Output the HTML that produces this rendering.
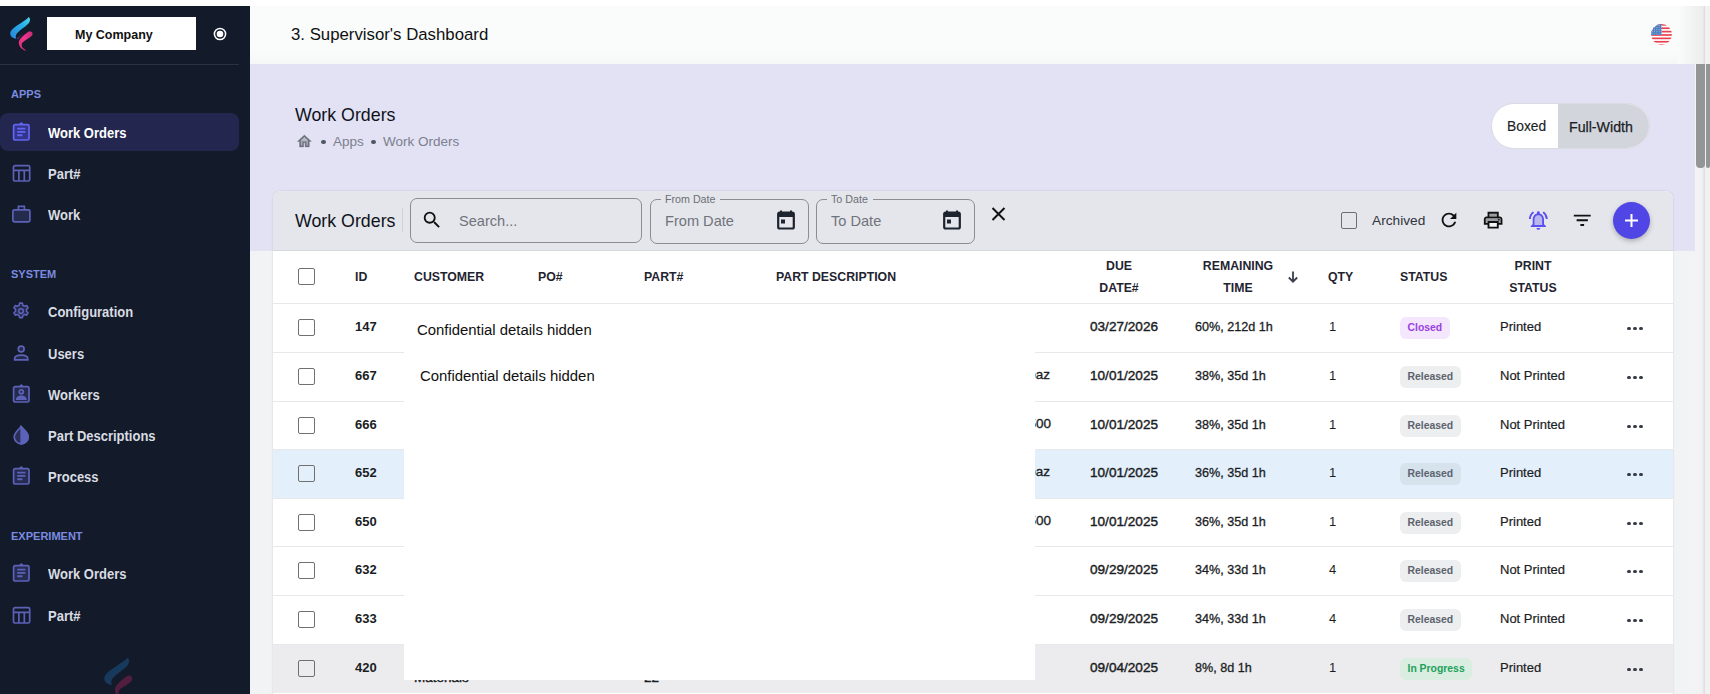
<!DOCTYPE html>
<html><head><meta charset="utf-8">
<style>
*{box-sizing:border-box;margin:0;padding:0}
html,body{width:1710px;height:694px;overflow:hidden;background:#fff;font-family:"Liberation Sans",sans-serif}
.abs{position:absolute}
#side{position:absolute;left:0;top:6px;width:250px;height:688px;background:#131a29;overflow:hidden}
.sec{position:absolute;left:11px;font-size:11.6px;font-weight:bold;color:#7b8be0;line-height:12px;transform:scaleX(.95);transform-origin:0 0}
.item{position:absolute;left:0;width:239px;height:38px}
.item.act{background:#23264e;border-radius:8px}
.item .tx{position:absolute;left:48px;top:1px;line-height:38px;font-size:14px;font-weight:bold;color:#d9dce2;transform:scaleX(.928);transform-origin:0 0;white-space:nowrap}
.item.act .tx{color:#fff}
.item svg{position:absolute;left:11px;top:9px}
#hdr{position:absolute;left:250px;top:6px;width:1455px;height:58px;background:linear-gradient(90deg,#fafbfb 0,#fafbfb 1428px,#ececec 1453px,#d8d8d8 1455px)}
#main{position:absolute;left:250px;top:64px;width:1446px;height:630px;background:#f2f3f5}
#lav{position:absolute;left:250px;top:64px;width:1445px;height:187px;background:#e3e2f4}
.hd{position:absolute;font-size:12.3px;font-weight:bold;color:#1f2430;line-height:22px}
.cb{position:absolute;width:17px;height:17px;border:1.5px solid #707070;border-radius:2px}
.row{position:absolute;left:273px;width:1400px;border-bottom:1px solid #e6e7ea;background:#fff}
.c{position:absolute;font-size:13px;color:#1a1d24;line-height:16px}
.chip{position:absolute;left:1400px;height:22px;border-radius:6px;font-size:10.4px;font-weight:bold;line-height:22px;padding:0 7.5px;background:#eceef0;color:#5d636d}
.dots{position:absolute;left:1627px;width:17px;height:5px}
.dots i{position:absolute;top:0.5px;width:3.6px;height:3.6px;border-radius:50%;background:#363b46}
</style></head><body>
<!-- sidebar -->
<div id="side">
  <!-- logo -->
  <svg class="abs" style="left:6px;top:8px" width="32" height="40" viewBox="0 0 32 40">
    <defs>
      <linearGradient id="lg1" x1="0" y1="1" x2="1" y2="0"><stop offset="0" stop-color="#2a86d8"/><stop offset="0.6" stop-color="#27aee8"/><stop offset="1" stop-color="#4fd6ea"/></linearGradient>
      <linearGradient id="lg2" x1="1" y1="0" x2="0" y2="1"><stop offset="0" stop-color="#c52a78"/><stop offset="0.5" stop-color="#f0368a"/><stop offset="1" stop-color="#e02c7c"/></linearGradient>
    </defs>
    <path d="M22.8 2.9 C24.5 4 24.5 7 22.5 9.5 C19 13 13 16.5 10.5 20 C9.5 21.5 9.5 23.5 10.5 24.7 C7 24.5 4.2 22.5 4.2 19.5 C4.2 17 6.5 14.5 11 11.5 C16 8 20.5 5.5 22.8 2.9Z" fill="url(#lg1)"/>
    <path d="M10.5 24.7 C13 22 18 19.5 22 17.5 C18 19 14 22 12.5 25.5Z" fill="#4a2e6a"/>
    <path d="M23.5 17.2 C26.5 17.5 27.5 19.5 26 21.5 C24 24 19 26 16.5 28.5 C15 30 15.5 33 17.5 34.5 C18.5 35.3 19.8 36 20.5 36.8 C17.5 36.5 14 34 13 30.5 C12.2 27.5 13.5 25 16.5 22.5 C18.5 20.5 21 18.5 23.5 17.2Z" fill="url(#lg2)"/>
  </svg>
  <div class="abs" style="left:47px;top:11px;width:149px;height:33px;background:#fff;font-size:12.5px;font-weight:bold;color:#111;line-height:37px;padding-left:28px">My Company</div>
  <svg class="abs" style="left:213px;top:21px" width="14" height="14" viewBox="0 0 14 14"><circle cx="7" cy="7" r="5.6" fill="none" stroke="#fff" stroke-width="1.5"/><circle cx="7" cy="7" r="3.3" fill="#fff"/></svg>
  <div class="abs" style="left:0;top:58px;width:239px;height:1px;background:#2b3242"></div>

  <div class="sec" style="top:82px">APPS</div>
  <div class="item act" style="top:107px">
    <svg width="20" height="20" viewBox="0 0 20 20" fill="none" stroke="#6366f1" stroke-width="1.7"><rect x="2.6" y="2.6" width="15.4" height="15.4" rx="1.6" fill="#33358a"/><path d="M8.3 2.6 L10.3 0.9 L12.3 2.6" fill="#6366f1" stroke-width="1.2"/><path d="M6.2 6.6h8.2M6.2 9.9h8.2M6.2 13.2h5.2" stroke-width="1.9"/></svg>
    <div class="tx">Work Orders</div></div>
  <div class="item" style="top:148px">
    <svg width="20" height="20" viewBox="0 0 20 20" fill="none" stroke="#5c62b8" stroke-width="1.7"><rect x="2.5" y="2.6" width="16.2" height="15.4" rx="1.6"/><path d="M2.5 7.4h16.2M7.9 7.4v10.6M13.3 7.4v10.6"/></svg>
    <div class="tx">Part#</div></div>
  <div class="item" style="top:189px">
    <svg width="20" height="20" viewBox="0 0 20 20" fill="none" stroke="#5c62b8" stroke-width="1.7"><rect x="1.9" y="5.9" width="17" height="12" rx="1.6" fill="#252b4d"/><path d="M7.4 5.9V2.4h6v3.5"/></svg>
    <div class="tx">Work</div></div>

  <div class="sec" style="top:262px">SYSTEM</div>
  <div class="item" style="top:286px">
    <svg width="20" height="20" viewBox="0 0 24 24" fill="none" stroke="#5c62b8" stroke-width="1.9" stroke-linejoin="round"><path d="M10.3 2.5h3.4l.6 2.7 1.9 1.1 2.6-.9 1.7 2.9-2 1.8v2.2l2 1.8-1.7 2.9-2.6-.9-1.9 1.1-.6 2.7h-3.4l-.6-2.7-1.9-1.1-2.6.9-1.7-2.9 2-1.8v-2.2l-2-1.8 1.7-2.9 2.6.9 1.9-1.1z" fill="#242a4c"/><circle cx="12" cy="12" r="2.8"/></svg>
    <div class="tx">Configuration</div></div>
  <div class="item" style="top:328px">
    <svg width="20" height="20" viewBox="0 0 20 20" fill="none" stroke="#5c62b8" stroke-width="1.7"><circle cx="10.2" cy="6" r="2.9" fill="#242a4c"/><path d="M3.6 16.8v-.9c0-2.3 2.9-3.7 6.6-3.7s6.6 1.4 6.6 3.7v.9z" fill="#242a4c"/></svg>
    <div class="tx">Users</div></div>
  <div class="item" style="top:369px">
    <svg width="20" height="20" viewBox="0 0 20 20" fill="none" stroke="#5c62b8" stroke-width="1.7"><rect x="2.6" y="2.6" width="15.4" height="15.4" rx="1.6" fill="#242a4c"/><path d="M8.3 2.6 L10.3 0.9 L12.3 2.6" fill="#5c62b8" stroke-width="1.2"/><circle cx="10.3" cy="7.8" r="2"/><path d="M5.8 15.2c.3-1.9 2-2.9 4.5-2.9s4.2 1 4.5 2.9z" fill="#5c62b8"/></svg>
    <div class="tx">Workers</div></div>
  <div class="item" style="top:410px">
    <svg width="20" height="20" viewBox="0 0 20 20" fill="none" stroke="#5c62b8" stroke-width="1.7"><path d="M10.2 1.6C7.5 4.6 3.2 8 3.2 11.8a7 7 0 0 0 14 0c0-3.8-4.3-7.2-7-10.2z" fill="#2a2f58"/><path d="M10.2 2v16.8a7 7 0 0 0 7-7c0-3.8-4.3-7-7-9.8z" fill="#5c62b8"/></svg>
    <div class="tx">Part Descriptions</div></div>
  <div class="item" style="top:451px">
    <svg width="20" height="20" viewBox="0 0 20 20" fill="none" stroke="#5c62b8" stroke-width="1.7"><rect x="2.6" y="2.6" width="15.4" height="15.4" rx="1.6" fill="#262b50"/><path d="M8.3 2.6 L10.3 0.9 L12.3 2.6" fill="#5c62b8" stroke-width="1.2"/><path d="M6.2 6.6h8.2M6.2 9.9h8.2M6.2 13.2h5.2" stroke-width="1.9"/></svg>
    <div class="tx">Process</div></div>

  <div class="sec" style="top:524px">EXPERIMENT</div>
  <div class="item" style="top:548px">
    <svg width="20" height="20" viewBox="0 0 20 20" fill="none" stroke="#5c62b8" stroke-width="1.7"><rect x="2.6" y="2.6" width="15.4" height="15.4" rx="1.6" fill="#262b50"/><path d="M8.3 2.6 L10.3 0.9 L12.3 2.6" fill="#5c62b8" stroke-width="1.2"/><path d="M6.2 6.6h8.2M6.2 9.9h8.2M6.2 13.2h5.2" stroke-width="1.9"/></svg>
    <div class="tx">Work Orders</div></div>
  <div class="item" style="top:590px">
    <svg width="20" height="20" viewBox="0 0 20 20" fill="none" stroke="#5c62b8" stroke-width="1.7"><rect x="2.5" y="2.6" width="16.2" height="15.4" rx="1.6"/><path d="M2.5 7.4h16.2M7.9 7.4v10.6M13.3 7.4v10.6"/></svg>
    <div class="tx">Part#</div></div>
  <svg class="abs" style="left:99px;top:648px;opacity:.4" width="40" height="50" viewBox="0 0 32 40">
    <path d="M22.8 2.9 C24.5 4 24.5 7 22.5 9.5 C19 13 13 16.5 10.5 20 C9.5 21.5 9.5 23.5 10.5 24.7 C7 24.5 4.2 22.5 4.2 19.5 C4.2 17 6.5 14.5 11 11.5 C16 8 20.5 5.5 22.8 2.9Z" fill="#1f6aa8"/>
    <path d="M23.5 17.2 C26.5 17.5 27.5 19.5 26 21.5 C24 24 19 26 16.5 28.5 C15 30 15.5 33 17.5 34.5 C18.5 35.3 19.8 36 20.5 36.8 C17.5 36.5 14 34 13 30.5 C12.2 27.5 13.5 25 16.5 22.5 C18.5 20.5 21 18.5 23.5 17.2Z" fill="#b02462"/>
  </svg>
</div>

<!-- header -->
<div id="hdr"><div class="abs" style="left:0;top:44px;width:1428px;height:14px;background:linear-gradient(180deg,rgba(0,0,0,0),rgba(0,0,0,.018))"></div>
  <div class="abs" style="left:41px;top:19px;font-size:16.8px;color:#111;line-height:20px">3. Supervisor's Dashboard</div>
</div>
<div id="main"></div>
<div id="lav"></div>
<!-- title -->
<div class="abs" style="left:295px;top:105px;font-size:17.8px;color:#0f1320;line-height:20px">Work Orders</div>
<svg class="abs" style="left:296px;top:132.5px" width="16.8" height="16.8" viewBox="0 0 24 24"><path d="M7 10.19V18h2v-6h6v6h2v-7.81l-5-4.5z" fill="#b8bbc6"/><path d="M12 5.69l5 4.5V18h-2v-6H9v6H7v-7.81l5-4.5M12 3L2 12h3v8h6v-6h2v6h6v-8h3L12 3z" fill="#6b717c" stroke="#6b717c" stroke-width=".5"/></svg>
<div class="abs" style="left:321px;top:140px;width:4.5px;height:4px;border-radius:50%;background:#4f5661"></div>
<div class="abs" style="left:333px;top:134px;font-size:13.5px;color:#7a808c;line-height:16px">Apps</div>
<div class="abs" style="left:371px;top:140px;width:4.5px;height:4px;border-radius:50%;background:#4f5661"></div>
<div class="abs" style="left:383px;top:134px;font-size:13.5px;color:#7a808c;line-height:16px">Work Orders</div>
<!-- toggle -->
<div class="abs" style="left:1491px;top:103px;width:159px;height:46px;border-radius:23px;background:#fff;border:1px solid #dadbe3;overflow:hidden">
  <div class="abs" style="left:66px;top:0;width:93px;height:46px;background:#d3d5dc"></div>
  <div class="abs" style="left:15px;top:14px;font-size:13.8px;color:#1b1f27;line-height:18px;-webkit-text-stroke:0.15px #1b1f27">Boxed</div>
  <div class="abs" style="left:77px;top:14px;font-size:14.2px;color:#1b1f27;line-height:18px;-webkit-text-stroke:0.25px #1b1f27">Full-Width</div>
</div>
<!-- card toolbar -->
<div class="abs" style="left:273px;top:191px;width:1400px;height:510px;background:#fff;border-radius:8px 8px 0 0;box-shadow:0 0 2px rgba(40,40,60,.18)"></div>
<div class="abs" style="left:273px;top:191px;width:1400px;height:60px;background:#e5e6eb;border-radius:8px 8px 0 0;border-bottom:1px solid #d7d8dc"></div>
<div class="abs" style="left:295px;top:211px;font-size:17.8px;color:#0f1320;line-height:20px">Work Orders</div>
<div class="abs" style="left:402px;top:208px;width:1px;height:24px;background:#d0d1d6"></div>
<div class="abs" style="left:410px;top:198px;width:232px;height:45px;border:1px solid #8b8d92;border-radius:7px"></div>
<svg class="abs" style="left:421px;top:209px" width="22" height="22" viewBox="0 0 24 24"><path d="M15.5 14h-.79l-.28-.27A6.471 6.471 0 0 0 16 9.5 6.500 6.500 0 1 0 9.5 16c1.61 0 3.09-.59 4.23-1.57l.27.28v.79l5 4.99L20.49 19l-4.99-5zm-6 0C7.01 14 5 11.99 5 9.5S7.01 5 9.5 5 14 7.01 14 9.5 11.99 14 9.5 14z" fill="#111"/></svg>
<div class="abs" style="left:459px;top:212.5px;font-size:14.6px;color:#6f737b;line-height:16px">Search...</div>
<!-- from date -->
<div class="abs" style="left:650px;top:199px;width:159px;height:45px;border:1px solid #8b8d92;border-radius:7px"></div>
<div class="abs" style="left:661px;top:195px;width:59px;height:8px;background:#e5e6eb"></div>
<div class="abs" style="left:665px;top:193px;font-size:10.7px;color:#6b6f77;line-height:13px">From Date</div>
<div class="abs" style="left:665px;top:213px;font-size:14.6px;color:#6f737b;line-height:16px">From Date</div>
<svg class="abs" style="left:777px;top:210px" width="18" height="20" viewBox="0 0 18 20"><path d="M4 0.5v3M14 0.5v3" stroke="#1d2430" stroke-width="2"/><rect x="1.2" y="2.5" width="15.6" height="16" rx="1.5" fill="none" stroke="#1d2430" stroke-width="2.2"/><rect x="1.2" y="2.5" width="15.6" height="4.5" fill="#1d2430"/><rect x="4" y="9.5" width="4" height="4" fill="#1d2430"/></svg>
<!-- to date -->
<div class="abs" style="left:816px;top:199px;width:159px;height:45px;border:1px solid #8b8d92;border-radius:7px"></div>
<div class="abs" style="left:827px;top:195px;width:46px;height:8px;background:#e5e6eb"></div>
<div class="abs" style="left:831px;top:193px;font-size:10.7px;color:#6b6f77;line-height:13px">To Date</div>
<div class="abs" style="left:831px;top:213px;font-size:14.6px;color:#6f737b;line-height:16px">To Date</div>
<svg class="abs" style="left:943px;top:210px" width="18" height="20" viewBox="0 0 18 20"><path d="M4 0.5v3M14 0.5v3" stroke="#1d2430" stroke-width="2"/><rect x="1.2" y="2.5" width="15.6" height="16" rx="1.5" fill="none" stroke="#1d2430" stroke-width="2.2"/><rect x="1.2" y="2.5" width="15.6" height="4.5" fill="#1d2430"/><rect x="4" y="9.5" width="4" height="4" fill="#1d2430"/></svg>
<svg class="abs" style="left:991px;top:207px" width="15" height="14" viewBox="0 0 15 14"><path d="M1.5 1 L13.5 13 M13.5 1 L1.5 13" stroke="#111" stroke-width="2"/></svg>
<!-- right tools -->
<div class="abs" style="left:1341px;top:212px;width:16px;height:17px;border:1.5px solid #6b6e74;border-radius:2px"></div>
<div class="abs" style="left:1372px;top:213px;font-size:13.7px;color:#30343c;line-height:16px">Archived</div>
<svg class="abs" style="left:1437.5px;top:209px" width="22" height="22" viewBox="0 0 24 24"><path d="M17.65 6.35A7.958 7.958 0 0 0 12 4c-4.42 0-7.99 3.58-7.99 8s3.57 8 7.99 8c3.73 0 6.84-2.550 7.73-6h-2.08A5.990 5.990 0 0 1 12 18c-3.31 0-6-2.69-6-6s2.69-6 6-6c1.66 0 3.14.69 4.22 1.78L13 11h7V4l-2.35 2.35z" fill="#111"/></svg>
<svg class="abs" style="left:1482px;top:209px" width="22.3" height="22.3" viewBox="0 0 24 24"><path d="M8 5h8v3H8z" fill="#9a9ca1"/><path d="M6 13h12v2h2v-4c0-.55-.45-1-1-1H5c-.55 0-1 .45-1 1v4h2v-2z" fill="#9a9ca1"/><path d="M8 15h8v4H8z" fill="#f4f4f6"/><circle cx="18" cy="11.5" r="1" fill="#111"/><path d="M19 8h-1V3H6v5H5c-1.66 0-3 1.34-3 3v6h4v4h12v-4h4v-6c0-1.66-1.34-3-3-3zM8 5h8v3H8V5zm8 14H8v-4h8v4zm4-4h-2v-2H6v2H4v-4c0-.55.45-1 1-1h14c.55 0 1 .45 1 1v4z" fill="#111"/></svg>
<svg class="abs" style="left:1527px;top:209px" width="22.7" height="22.7" viewBox="0 0 24 24"><path d="M12 6.5c-2.49 0-4 2.02-4 4.5v6h8v-6c0-2.48-1.51-4.5-4-4.5z" fill="#b9b6ee"/><path d="M12 22c1.1 0 2-.9 2-2h-4c0 1.1.9 2 2 2zm6-6v-5c0-3.07-1.63-5.64-4.5-6.32V4c0-.83-.67-1.5-1.5-1.5s-1.5.67-1.5 1.5v.68C7.64 5.36 6 7.92 6 11v5l-2 2v1h16v-1l-2-2zm-2 1H8v-6c0-2.48 1.51-4.5 4-4.5s4 2.02 4 4.5v6zM7.58 4.080 6.15 2.65C3.75 4.48 2.17 7.3 2.03 10.5h2a8.445 8.445 0 0 1 3.55-6.42zm12.39 6.42h2c-.15-3.2-1.73-6.02-4.12-7.85l-1.42 1.43a8.495 8.495 0 0 1 3.54 6.42z" fill="#5a4ff0"/></svg>
<svg class="abs" style="left:1571px;top:209px" width="22.5" height="22.5" viewBox="0 0 24 24"><path d="M10 18h4v-2h-4v2zM3 6v2h18V6H3zm3 7h12v-2H6v2z" fill="#111"/></svg>
<div class="abs" style="left:1613px;top:202px;width:37px;height:37px;border-radius:50%;background:#4f46e5;box-shadow:0 2px 5px rgba(0,0,0,.25)"></div>
<svg class="abs" style="left:1623px;top:212px" width="17" height="17" viewBox="0 0 17 17"><path d="M8.5 2v13M2 8.5h13" stroke="#fff" stroke-width="2"/></svg>
<!-- table -->
<div class="abs" style="left:273px;top:251px;width:1400px;height:443px;background:#fff"></div>
<div class="abs" style="left:273px;top:303px;width:1400px;height:1px;background:#e7e8eb"></div>
<div class="cb" style="left:298px;top:268px"></div>
<div class="hd" style="left:355px;top:266px">ID</div>
<div class="hd" style="left:414px;top:266px">CUSTOMER</div>
<div class="hd" style="left:538px;top:266px">PO#</div>
<div class="hd" style="left:644px;top:266px">PART#</div>
<div class="hd" style="left:776px;top:266px">PART DESCRIPTION</div>
<div class="hd" style="left:1069px;top:255px;width:100px;text-align:center">DUE<br>DATE#</div>
<div class="hd" style="left:1188px;top:255px;width:100px;text-align:center">REMAINING<br>TIME</div>
<svg class="abs" style="left:1286px;top:270px" width="14" height="14" viewBox="0 0 14 14"><path d="M7 1.5v10M2.8 7.5 7 11.7 11.2 7.5" fill="none" stroke="#3a3f4a" stroke-width="1.8"/></svg>
<div class="hd" style="left:1328px;top:266px">QTY</div>
<div class="hd" style="left:1400px;top:266px">STATUS</div>
<div class="hd" style="left:1483px;top:255px;width:100px;text-align:center">PRINT<br>STATUS</div>
<div class="abs" style="left:273px;top:304px;width:1400px;height:49px;background:#fff;border-bottom:1px solid #e7e8eb">
<div class="cb" style="left:25px;top:15px"></div>
<div class="c" style="left:82px;top:15px;font-weight:bold">147</div>
<div class="c" style="left:817px;top:15px;font-size:13.6px;font-weight:normal;-webkit-text-stroke:0.4px #1a1d24">03/27/2026</div>
<div class="c" style="left:922px;top:15px;font-size:12.6px;-webkit-text-stroke:0.3px #1a1d24">60%, 212d 1h</div>
<div class="c" style="left:1056px;top:15px">1</div>
<div class="chip" style="left:1127px;top:13px;background:#f3e6fd;color:#9a3fe0">Closed</div>
<div class="c" style="left:1227px;top:15px;font-size:13px;-webkit-text-stroke:0.2px #1a1d24">Printed</div>
<div class="dots" style="left:1354px;top:22px"><i style="left:0"></i><i style="left:6px"></i><i style="left:12px"></i></div>
</div>
<div class="abs" style="left:273px;top:353px;width:1400px;height:49px;background:#fff;border-bottom:1px solid #e7e8eb">
<div class="cb" style="left:25px;top:15px"></div>
<div class="c" style="left:82px;top:15px;font-weight:bold">667</div>
<div class="c" style="left:817px;top:15px;font-size:13.6px;font-weight:normal;-webkit-text-stroke:0.4px #1a1d24">10/01/2025</div>
<div class="c" style="left:922px;top:15px;font-size:12.6px;-webkit-text-stroke:0.3px #1a1d24">38%, 35d 1h</div>
<div class="c" style="left:1056px;top:15px">1</div>
<div class="chip" style="left:1127px;top:13px;">Released</div>
<div class="c" style="left:1227px;top:15px;font-size:13px;-webkit-text-stroke:0.2px #1a1d24">Not Printed</div>
<div class="dots" style="left:1354px;top:22px"><i style="left:0"></i><i style="left:6px"></i><i style="left:12px"></i></div>
</div>
<div class="abs" style="left:273px;top:402px;width:1400px;height:48px;background:#fff;border-bottom:1px solid #e7e8eb">
<div class="cb" style="left:25px;top:15px"></div>
<div class="c" style="left:82px;top:15px;font-weight:bold">666</div>
<div class="c" style="left:817px;top:15px;font-size:13.6px;font-weight:normal;-webkit-text-stroke:0.4px #1a1d24">10/01/2025</div>
<div class="c" style="left:922px;top:15px;font-size:12.6px;-webkit-text-stroke:0.3px #1a1d24">38%, 35d 1h</div>
<div class="c" style="left:1056px;top:15px">1</div>
<div class="chip" style="left:1127px;top:13px;">Released</div>
<div class="c" style="left:1227px;top:15px;font-size:13px;-webkit-text-stroke:0.2px #1a1d24">Not Printed</div>
<div class="dots" style="left:1354px;top:22px"><i style="left:0"></i><i style="left:6px"></i><i style="left:12px"></i></div>
</div>
<div class="abs" style="left:273px;top:450px;width:1400px;height:49px;background:#e3f0fb;border-bottom:1px solid #e7e8eb">
<div class="cb" style="left:25px;top:15px"></div>
<div class="c" style="left:82px;top:15px;font-weight:bold">652</div>
<div class="c" style="left:817px;top:15px;font-size:13.6px;font-weight:normal;-webkit-text-stroke:0.4px #1a1d24">10/01/2025</div>
<div class="c" style="left:922px;top:15px;font-size:12.6px;-webkit-text-stroke:0.3px #1a1d24">36%, 35d 1h</div>
<div class="c" style="left:1056px;top:15px">1</div>
<div class="chip" style="left:1127px;top:13px;background:#d6e2ec;color:#5b6470">Released</div>
<div class="c" style="left:1227px;top:15px;font-size:13px;-webkit-text-stroke:0.2px #1a1d24">Printed</div>
<div class="dots" style="left:1354px;top:22px"><i style="left:0"></i><i style="left:6px"></i><i style="left:12px"></i></div>
</div>
<div class="abs" style="left:273px;top:499px;width:1400px;height:48px;background:#fff;border-bottom:1px solid #e7e8eb">
<div class="cb" style="left:25px;top:15px"></div>
<div class="c" style="left:82px;top:15px;font-weight:bold">650</div>
<div class="c" style="left:817px;top:15px;font-size:13.6px;font-weight:normal;-webkit-text-stroke:0.4px #1a1d24">10/01/2025</div>
<div class="c" style="left:922px;top:15px;font-size:12.6px;-webkit-text-stroke:0.3px #1a1d24">36%, 35d 1h</div>
<div class="c" style="left:1056px;top:15px">1</div>
<div class="chip" style="left:1127px;top:13px;">Released</div>
<div class="c" style="left:1227px;top:15px;font-size:13px;-webkit-text-stroke:0.2px #1a1d24">Printed</div>
<div class="dots" style="left:1354px;top:22px"><i style="left:0"></i><i style="left:6px"></i><i style="left:12px"></i></div>
</div>
<div class="abs" style="left:273px;top:547px;width:1400px;height:49px;background:#fff;border-bottom:1px solid #e7e8eb">
<div class="cb" style="left:25px;top:15px"></div>
<div class="c" style="left:82px;top:15px;font-weight:bold">632</div>
<div class="c" style="left:817px;top:15px;font-size:13.6px;font-weight:normal;-webkit-text-stroke:0.4px #1a1d24">09/29/2025</div>
<div class="c" style="left:922px;top:15px;font-size:12.6px;-webkit-text-stroke:0.3px #1a1d24">34%, 33d 1h</div>
<div class="c" style="left:1056px;top:15px">4</div>
<div class="chip" style="left:1127px;top:13px;">Released</div>
<div class="c" style="left:1227px;top:15px;font-size:13px;-webkit-text-stroke:0.2px #1a1d24">Not Printed</div>
<div class="dots" style="left:1354px;top:22px"><i style="left:0"></i><i style="left:6px"></i><i style="left:12px"></i></div>
</div>
<div class="abs" style="left:273px;top:596px;width:1400px;height:49px;background:#fff;border-bottom:1px solid #e7e8eb">
<div class="cb" style="left:25px;top:15px"></div>
<div class="c" style="left:82px;top:15px;font-weight:bold">633</div>
<div class="c" style="left:817px;top:15px;font-size:13.6px;font-weight:normal;-webkit-text-stroke:0.4px #1a1d24">09/29/2025</div>
<div class="c" style="left:922px;top:15px;font-size:12.6px;-webkit-text-stroke:0.3px #1a1d24">34%, 33d 1h</div>
<div class="c" style="left:1056px;top:15px">4</div>
<div class="chip" style="left:1127px;top:13px;">Released</div>
<div class="c" style="left:1227px;top:15px;font-size:13px;-webkit-text-stroke:0.2px #1a1d24">Not Printed</div>
<div class="dots" style="left:1354px;top:22px"><i style="left:0"></i><i style="left:6px"></i><i style="left:12px"></i></div>
</div>
<div class="abs" style="left:273px;top:645px;width:1400px;height:48px;background:#ececee;border-bottom:1px solid #ececee">
<div class="cb" style="left:25px;top:15px"></div>
<div class="c" style="left:82px;top:15px;font-weight:bold">420</div>
<div class="c" style="left:817px;top:15px;font-size:13.6px;font-weight:normal;-webkit-text-stroke:0.4px #1a1d24">09/04/2025</div>
<div class="c" style="left:922px;top:15px;font-size:12.6px;-webkit-text-stroke:0.3px #1a1d24">8%, 8d 1h</div>
<div class="c" style="left:1056px;top:15px">1</div>
<div class="chip" style="left:1127px;top:13px;background:#d9eee0;color:#23a05b">In Progress</div>
<div class="c" style="left:1227px;top:15px;font-size:13px;-webkit-text-stroke:0.2px #1a1d24">Printed</div>
<div class="dots" style="left:1354px;top:22px"><i style="left:0"></i><i style="left:6px"></i><i style="left:12px"></i></div>
</div>
<div class="c" style="left:950px;width:100px;text-align:right;top:367px;font-size:13.5px;-webkit-text-stroke:0.3px #1a1d24">Topaz</div>
<div class="c" style="left:951px;width:100px;text-align:right;top:416px;font-size:13.5px;-webkit-text-stroke:0.3px #1a1d24">X500</div>
<div class="c" style="left:950px;width:100px;text-align:right;top:464px;font-size:13.5px;-webkit-text-stroke:0.3px #1a1d24">Topaz</div>
<div class="c" style="left:951px;width:100px;text-align:right;top:513px;font-size:13.5px;-webkit-text-stroke:0.3px #1a1d24">X500</div>
<div class="c" style="left:414px;top:670px;font-size:13.5px;-webkit-text-stroke:0.4px #1a1d24">Materials</div>
<div class="c" style="left:644px;top:670px;font-size:13.5px;-webkit-text-stroke:0.4px #1a1d24">22</div>
<div class="abs" style="left:404px;top:304px;width:631px;height:376px;background:#fff"></div>
<div class="abs" style="left:417px;top:320.5px;font-size:14.9px;color:#111;line-height:18px">Confidential details hidden</div>
<div class="abs" style="left:420px;top:367px;font-size:14.9px;color:#111;line-height:18px">Confidential details hidden</div>
<!-- flag -->
<svg class="abs" style="left:1651px;top:24px" width="22" height="22" viewBox="0 0 22 22"><defs><clipPath id="fc"><circle cx="10.5" cy="10.5" r="10.4"/></clipPath></defs><g clip-path="url(#fc)"><rect width="22" height="22" fill="#fff"/><rect y="0.00" width="22" height="1.69" fill="#e8404f"/><rect y="3.38" width="22" height="1.69" fill="#e8404f"/><rect y="6.77" width="22" height="1.69" fill="#e8404f"/><rect y="10.15" width="22" height="1.69" fill="#e8404f"/><rect y="13.54" width="22" height="1.69" fill="#e8404f"/><rect y="16.92" width="22" height="1.69" fill="#e8404f"/><rect y="20.31" width="22" height="1.69" fill="#e8404f"/><rect width="10.5" height="11" fill="#4f80bf"/><circle cx="1.5" cy="1.5" r=".45" fill="#dfe8f5"/><circle cx="3.7" cy="1.5" r=".45" fill="#dfe8f5"/><circle cx="5.9" cy="1.5" r=".45" fill="#dfe8f5"/><circle cx="8.1" cy="1.5" r=".45" fill="#dfe8f5"/><circle cx="10.3" cy="1.5" r=".45" fill="#dfe8f5"/><circle cx="1.5" cy="3.6" r=".45" fill="#dfe8f5"/><circle cx="3.7" cy="3.6" r=".45" fill="#dfe8f5"/><circle cx="5.9" cy="3.6" r=".45" fill="#dfe8f5"/><circle cx="8.1" cy="3.6" r=".45" fill="#dfe8f5"/><circle cx="10.3" cy="3.6" r=".45" fill="#dfe8f5"/><circle cx="1.5" cy="5.7" r=".45" fill="#dfe8f5"/><circle cx="3.7" cy="5.7" r=".45" fill="#dfe8f5"/><circle cx="5.9" cy="5.7" r=".45" fill="#dfe8f5"/><circle cx="8.1" cy="5.7" r=".45" fill="#dfe8f5"/><circle cx="10.3" cy="5.7" r=".45" fill="#dfe8f5"/><circle cx="1.5" cy="7.8" r=".45" fill="#dfe8f5"/><circle cx="3.7" cy="7.8" r=".45" fill="#dfe8f5"/><circle cx="5.9" cy="7.8" r=".45" fill="#dfe8f5"/><circle cx="8.1" cy="7.8" r=".45" fill="#dfe8f5"/><circle cx="10.3" cy="7.8" r=".45" fill="#dfe8f5"/><circle cx="1.5" cy="9.9" r=".45" fill="#dfe8f5"/><circle cx="3.7" cy="9.9" r=".45" fill="#dfe8f5"/><circle cx="5.9" cy="9.9" r=".45" fill="#dfe8f5"/><circle cx="8.1" cy="9.9" r=".45" fill="#dfe8f5"/><circle cx="10.3" cy="9.9" r=".45" fill="#dfe8f5"/></g></svg>
<!-- scrollbar -->
<div class="abs" style="left:1695px;top:64px;width:10px;height:630px;background:linear-gradient(90deg,#f4f4f6 0,#f1f1f3 70%,#dcdcde 100%)"></div>
<div class="abs" style="left:1705px;top:6px;width:5px;height:688px;background:#f1f1f1"></div>
<div class="abs" style="left:1696px;top:64px;width:9px;height:104px;border-radius:0 0 4px 4px;background:#949597"></div>
<div class="abs" style="left:1706px;top:64px;width:4px;height:104px;border-radius:0 0 3px 3px;background:#949597"></div>
</body></html>
